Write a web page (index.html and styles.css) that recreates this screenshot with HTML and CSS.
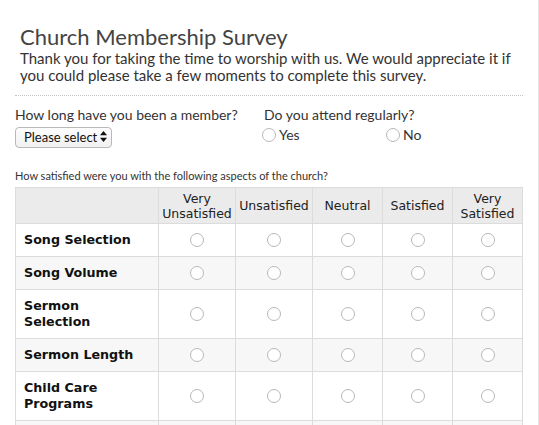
FILE: index.html
```html
<!DOCTYPE html>
<html lang="en">
<head>
    <meta charset="UTF-8">
    <meta name="viewport" content="width=device-width, initial-scale=1.0">
    <title>Church Membership Survey</title>
    <link rel="stylesheet" href="styles.css">
</head>
<body>
    <div class="page">
        <div class="intro">
            <h1>Church Membership Survey</h1>
            <p>Thank you for taking the time to worship with us. We would appreciate it if you could please take a few moments to complete this survey.</p>
        </div>

        <div class="questions">
            <div class="question">
                <label for="member-length">How long have you been a member?</label>
                <div class="select-wrap">
                    <select id="member-length">
                        <option>Please select</option>
                        <option>Less than a year</option>
                        <option>1-5 years</option>
                        <option>More than 5 years</option>
                    </select>
                    <svg class="select-arrows" width="7" height="11" viewBox="0 0 7 11">
                        <path d="M3.5 0 L7 4.2 L0 4.2 Z" fill="#111"/>
                        <path d="M3.5 11 L7 6.8 L0 6.8 Z" fill="#111"/>
                    </svg>
                </div>
            </div>
            <div class="question">
                <span class="q-label">Do you attend regularly?</span>
                <div class="choices">
                    <label class="choice"><input type="radio" name="regular"> Yes</label>
                    <label class="choice"><input type="radio" name="regular"> No</label>
                </div>
            </div>
        </div>

        <p class="matrix-caption">How satisfied were you with the following aspects of the church?</p>

        <table class="matrix">
            <colgroup>
                <col class="col-label">
                <col class="col-wide">
                <col class="col-wide">
                <col>
                <col>
                <col>
            </colgroup>
            <thead>
                <tr>
                    <th></th>
                    <th>Very Unsatisfied</th>
                    <th>Unsatisfied</th>
                    <th>Neutral</th>
                    <th>Satisfied</th>
                    <th>Very Satisfied</th>
                </tr>
            </thead>
            <tbody>
                <tr>
                    <td class="row-label">Song Selection</td>
                    <td><input type="radio" name="r1"></td>
                    <td><input type="radio" name="r1"></td>
                    <td><input type="radio" name="r1"></td>
                    <td><input type="radio" name="r1"></td>
                    <td><input type="radio" name="r1"></td>
                </tr>
                <tr>
                    <td class="row-label">Song Volume</td>
                    <td><input type="radio" name="r2"></td>
                    <td><input type="radio" name="r2"></td>
                    <td><input type="radio" name="r2"></td>
                    <td><input type="radio" name="r2"></td>
                    <td><input type="radio" name="r2"></td>
                </tr>
                <tr>
                    <td class="row-label">Sermon Selection</td>
                    <td><input type="radio" name="r3"></td>
                    <td><input type="radio" name="r3"></td>
                    <td><input type="radio" name="r3"></td>
                    <td><input type="radio" name="r3"></td>
                    <td><input type="radio" name="r3"></td>
                </tr>
                <tr>
                    <td class="row-label">Sermon Length</td>
                    <td><input type="radio" name="r4"></td>
                    <td><input type="radio" name="r4"></td>
                    <td><input type="radio" name="r4"></td>
                    <td><input type="radio" name="r4"></td>
                    <td><input type="radio" name="r4"></td>
                </tr>
                <tr>
                    <td class="row-label">Child Care Programs</td>
                    <td><input type="radio" name="r5"></td>
                    <td><input type="radio" name="r5"></td>
                    <td><input type="radio" name="r5"></td>
                    <td><input type="radio" name="r5"></td>
                    <td><input type="radio" name="r5"></td>
                </tr>
                <tr>
                    <td class="row-label">Youth Programs</td>
                    <td><input type="radio" name="r6"></td>
                    <td><input type="radio" name="r6"></td>
                    <td><input type="radio" name="r6"></td>
                    <td><input type="radio" name="r6"></td>
                    <td><input type="radio" name="r6"></td>
                </tr>
            </tbody>
        </table>
    </div>
</body>
</html>
```

FILE: styles.css
```css
html, body {
    margin: 0;
    padding: 0;
    background: #fff;
}

body {
    font-family: Lato, "Open Sans", Arial, sans-serif;
    color: #333;
    overflow: hidden;
}

.page {
    width: 539px;
    min-height: 425px;
    box-sizing: border-box;
    padding-left: 15px;
    padding-right: 15px;
    border-right: 1px solid #e6e6e6;
}

.page > * {
    width: 508px;
}

.intro {
    padding: 0 0 11px 5px;
    border-bottom: 1px dotted #c4c4c4;
    box-sizing: border-box;
}

.intro h1 {
    margin: 0;
    padding-top: 26px;
    font-size: 22px;
    font-weight: normal;
    line-height: 22px;
    color: #444;
}

.intro p {
    margin: 2px 0 0;
    font-size: 15px;
    line-height: 17px;
    color: #333;
}

.questions {
    display: grid;
    grid-template-columns: 249px 1fr;
    padding-top: 10px;
}

.question label,
.question .q-label {
    display: block;
    font-size: 14px;
    line-height: 17px;
    color: #333;
}

.select-wrap {
    position: relative;
    display: inline-block;
    margin-top: 3px;
}

.select-wrap select {
    appearance: none;
    -webkit-appearance: none;
    width: 97px;
    height: 21px;
    margin: 0;
    padding: 0 0 0 8px;
    font-family: Lato, "Open Sans", Arial, sans-serif;
    font-size: 13px;
    color: #111;
    background: linear-gradient(#fdfdfd, #f1f1f1);
    border: 1px solid #b9b9b9;
    border-radius: 4px;
}

.select-arrows {
    position: absolute;
    right: 5px;
    top: 5px;
    pointer-events: none;
}

.choices {
    display: grid;
    grid-template-columns: 124px 1fr;
    margin-top: 3px;
}

.question .choice {
    display: flex;
    align-items: center;
    gap: 3px;
    margin-left: -2px;
    font-size: 14px;
    line-height: 18px;
}

input[type="radio"] {
    appearance: none;
    -webkit-appearance: none;
    width: 14px;
    height: 14px;
    margin: 0;
    border: 1px solid #b8b8b8;
    border-radius: 50%;
    background: #fff;
    vertical-align: middle;
}

.matrix-caption {
    margin: 21px 0 0;
    font-size: 11px;
    line-height: 13px;
    color: #333;
}

.matrix {
    margin-top: 5px;
    border-collapse: collapse;
    table-layout: fixed;
    font-family: "DejaVu Sans", Verdana, sans-serif;
    font-size: 12.5px;
    color: #111;
}

.matrix .col-label {
    width: 143px;
}

.matrix .col-wide {
    width: 77px;
}

.matrix th,
.matrix td {
    border: 1px solid #dcdcdc;
    text-align: center;
}

.matrix th {
    background: #ebebeb;
    font-weight: normal;
    line-height: 15px;
    padding: 3px 0 2px;
    color: #222;
}

.matrix td {
    padding: 8px 0;
    line-height: 16px;
}

.matrix td input {
    display: block;
    margin: 0 auto;
}

.matrix td.row-label {
    text-align: left;
    padding-left: 8px;
    padding-right: 12px;
    font-size: 12.7px;
    font-weight: bold;
    color: #111;
}

.matrix tbody tr:nth-child(even) td {
    background: #f7f7f7;
}
```
